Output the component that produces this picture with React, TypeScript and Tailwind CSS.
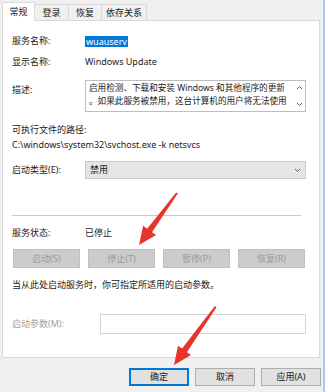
import React from "react";

function Tab({ w, children }: { w: string; children: React.ReactNode }) {
  return (
    <div className={`flex h-[16px] ${w} items-center justify-center border border-b-0 border-l-0 border-[#d9d9d9] bg-[#f0f0f0]`}>
      {children}
    </div>
  );
}

function Chevron({ up }: { up?: boolean }) {
  return (
    <svg width="7" height="5" viewBox="0 0 7 5">
      <path d={up ? "M1 4 L3.5 1.5 L6 4" : "M1 1 L3.5 3.5 L6 1"} fill="none" stroke="#606060" strokeWidth="1" />
    </svg>
  );
}

const disabledBtn =
  "flex h-[19px] w-[67px] items-center justify-center border border-[#bfbfbf] bg-[#cccccc] text-[#9a9a9a]";

export default function App() {
  return (
    <div className="relative flex h-[392px] w-[328px] overflow-hidden bg-[#f0f0f0] font-['Noto_Sans','Noto_Sans_CJK_SC',sans-serif] text-[9px] leading-[14px] text-[#1a1a1a]">
      <div className="flex w-[323px] flex-col pl-[2px] pt-[2px]">
        {/* tabs */}
        <div className="flex h-[18px] items-end">
          <div className="relative z-10 -mb-px flex h-[19px] w-[33px] items-center justify-center border border-b-0 border-[#d9d9d9] bg-white">
            常规
          </div>
          <Tab w="w-[34px]">登录</Tab>
          <Tab w="w-[33px]">恢复</Tab>
          <Tab w="w-[45px]">依存关系</Tab>
        </div>

        {/* panel */}
        <div className="flex h-[338px] w-[318px] flex-col border border-[#d9d9d9] bg-white pl-[9px] pr-[13px]">
          <div className="mt-[13px] flex h-[14px] items-center">
            <div className="w-[73px]">服务名称:</div>
            <span className="inline-block bg-[#0078d7] px-px leading-[11px] text-white">wuauserv</span>
          </div>
          <div className="mt-[7px] flex h-[14px] items-center">
            <div className="w-[73px]">显示名称:</div>
            <div>Windows Update</div>
          </div>
          <div className="mt-[11px] flex h-[32px]">
            <div className="w-[73px] pt-[3px]">描述:</div>
            <div className="flex flex-1 border border-[#bdbdbd] pl-[3px] text-[8.6px] leading-[13px]">
              <div className="flex-1 overflow-hidden whitespace-nowrap pt-px">
                <div>启用检测、下载和安装 Windows 和其他程序的更新</div>
                <div>。如果此服务被禁用，这台计算机的用户将无法使用</div>
              </div>
              <div className="flex w-[12px] flex-col items-center justify-between py-[4px]">
                <Chevron up />
                <Chevron />
              </div>
            </div>
          </div>
          <div className="mt-[11px] h-[14px]">可执行文件的路径:</div>
          <div className="mt-px h-[14px]">C:\windows\system32\svchost.exe -k netsvcs</div>
          <div className="mt-[9px] flex h-[18px] items-center">
            <div className="w-[73px]">启动类型(E):</div>
            <div className="flex h-[18px] flex-1 items-center justify-between border border-[#cccccc] bg-[#e5e5e5] pl-[4px] pr-[4px]">
              <span>禁用</span>
              <Chevron />
            </div>
          </div>
          <div className="mr-[5px] mt-[36px] h-px bg-[#c9c9c9]" />
          <div className="mt-[10px] flex h-[14px] items-center">
            <div className="w-[73px]">服务状态:</div>
            <div>已停止</div>
          </div>
          <div className="ml-px mt-[9px] flex gap-[8px]">
            <div className={disabledBtn}>启动(S)</div>
            <div className={disabledBtn}>停止(T)</div>
            <div className={disabledBtn}>暂停(P)</div>
            <div className={disabledBtn}>恢复(R)</div>
          </div>
          <div className="mt-[10px] h-[14px]">当从此处启动服务时，你可指定所适用的启动参数。</div>
          <div className="mt-[22px] flex h-[20px] items-center">
            <div className="w-[88px] text-[#a0a0a0]">启动参数(M):</div>
            <div className="h-[20px] flex-1 border border-[#d4d4d4] bg-white" />
          </div>
        </div>

        {/* dialog buttons */}
        <div className="mt-[10px] flex justify-end gap-[6px] pr-[2px]">
          <div className="flex h-[18px] w-[60px] items-center justify-center border-2 border-[#0078d7] bg-[#e1e1e1]">确定</div>
          <div className="flex h-[18px] w-[60px] items-center justify-center border border-[#adadad] bg-[#e1e1e1]">取消</div>
          <div className="flex h-[18px] w-[60px] items-center justify-center border border-[#adadad] bg-[#e1e1e1]">应用(A)</div>
        </div>
      </div>
      <div className="w-[2px] bg-[#a9cbe9]" />
      <div className="w-[3px] bg-white" />

      {/* red arrows */}
      <svg className="pointer-events-none absolute inset-0" width="328" height="392" viewBox="0 0 328 392">
        <polygon
          fill="#e8332b"
          points="177.8,193.6 152,232.3 156.1,235.1 139,245 143.1,225.8 147.2,228.7 176.2,192.4"
        />
        <polygon
          fill="#e8332b"
          points="216.5,307.3 186.9,352.2 191,355.1 174,365 178,345.7 182.1,348.6 214.9,306.1"
        />
      </svg>
    </div>
  );
}
